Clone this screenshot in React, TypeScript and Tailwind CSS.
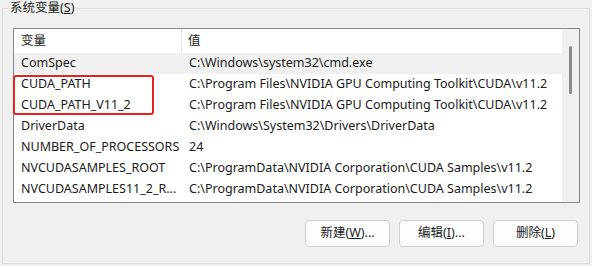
const rows = [
  { name: 'ComSpec', value: 'C:\\Windows\\system32\\cmd.exe' },
  { name: 'CUDA_PATH', value: 'C:\\Program Files\\NVIDIA GPU Computing Toolkit\\CUDA\\v11.2' },
  { name: 'CUDA_PATH_V11_2', value: 'C:\\Program Files\\NVIDIA GPU Computing Toolkit\\CUDA\\v11.2' },
  { name: 'DriverData', value: 'C:\\Windows\\System32\\Drivers\\DriverData' },
  { name: 'NUMBER_OF_PROCESSORS', value: '24' },
  { name: 'NVCUDASAMPLES_ROOT', value: 'C:\\ProgramData\\NVIDIA Corporation\\CUDA Samples\\v11.2' },
  { name: 'NVCUDASAMPLES11_2_R...', value: 'C:\\ProgramData\\NVIDIA Corporation\\CUDA Samples\\v11.2' },
];

function Btn({ label, hot, rest }: { label: string; hot: string; rest: string }) {
  return (
    <button className="w-[85px] h-[27px] bg-[#fdfdfd] border border-[#d0d0d0] rounded-[4px] text-[12.5px] text-[#1b1b1b]">
      {label}(<span className="underline">{hot}</span>){rest}
    </button>
  );
}

export default function App() {
  return (
    <div
      className="w-[592px] h-[266px] bg-[#f0f0f0] pt-2 px-0.5 pb-0.5 text-[#1b1b1b]"
      style={{ fontFamily: '"Noto Sans", "Noto Sans CJK SC", sans-serif' }}
    >
      <div className="relative h-full border border-[#dcdcdc] pl-[10px] pr-[9px] pt-[19px]">
        <div className="absolute left-[5px] top-[-9px] px-[2px] bg-[#f0f0f0] text-[12.5px] leading-[16px]">
          系统变量(<span className="underline">S</span>)
        </div>

        {/* 列表 */}
        <div className="relative h-[175px] border border-[#828790] bg-white flex">
          <div className="flex-1 text-[12.5px]">
            <div className="flex h-6 items-center">
              <div className="w-[168px] h-full pl-[7px] flex items-center border-r border-[#e5e5e5]">变量</div>
              <div className="pl-[6px]">值</div>
            </div>
            {rows.map((r, i) => (
              <div key={r.name} className={`flex h-[21px] items-center ${i === 0 ? 'bg-[#f0f0f0]' : ''}`}>
                <div className="w-[169px] pl-[7px] whitespace-nowrap">{r.name}</div>
                <div className="pl-[6px] whitespace-nowrap">{r.value}</div>
              </div>
            ))}
          </div>
          <div className="w-[17px] bg-[#f0f0f0] pt-[17px] flex justify-center">
            <div className="w-[3px] h-[48px] bg-[#8a8a8a] rounded-full" />
          </div>

          <div className="absolute left-[-1px] top-[46px] w-[141px] h-[40px] border-2 border-[#e8201f] rounded-[3px]" />
        </div>

        <div className="flex justify-end gap-[9px] mt-[17px] pr-[2px]">
          <Btn label="新建" hot="W" rest="..." />
          <Btn label="编辑" hot="I" rest="..." />
          <Btn label="删除" hot="L" rest="" />
        </div>
      </div>
    </div>
  );
}
